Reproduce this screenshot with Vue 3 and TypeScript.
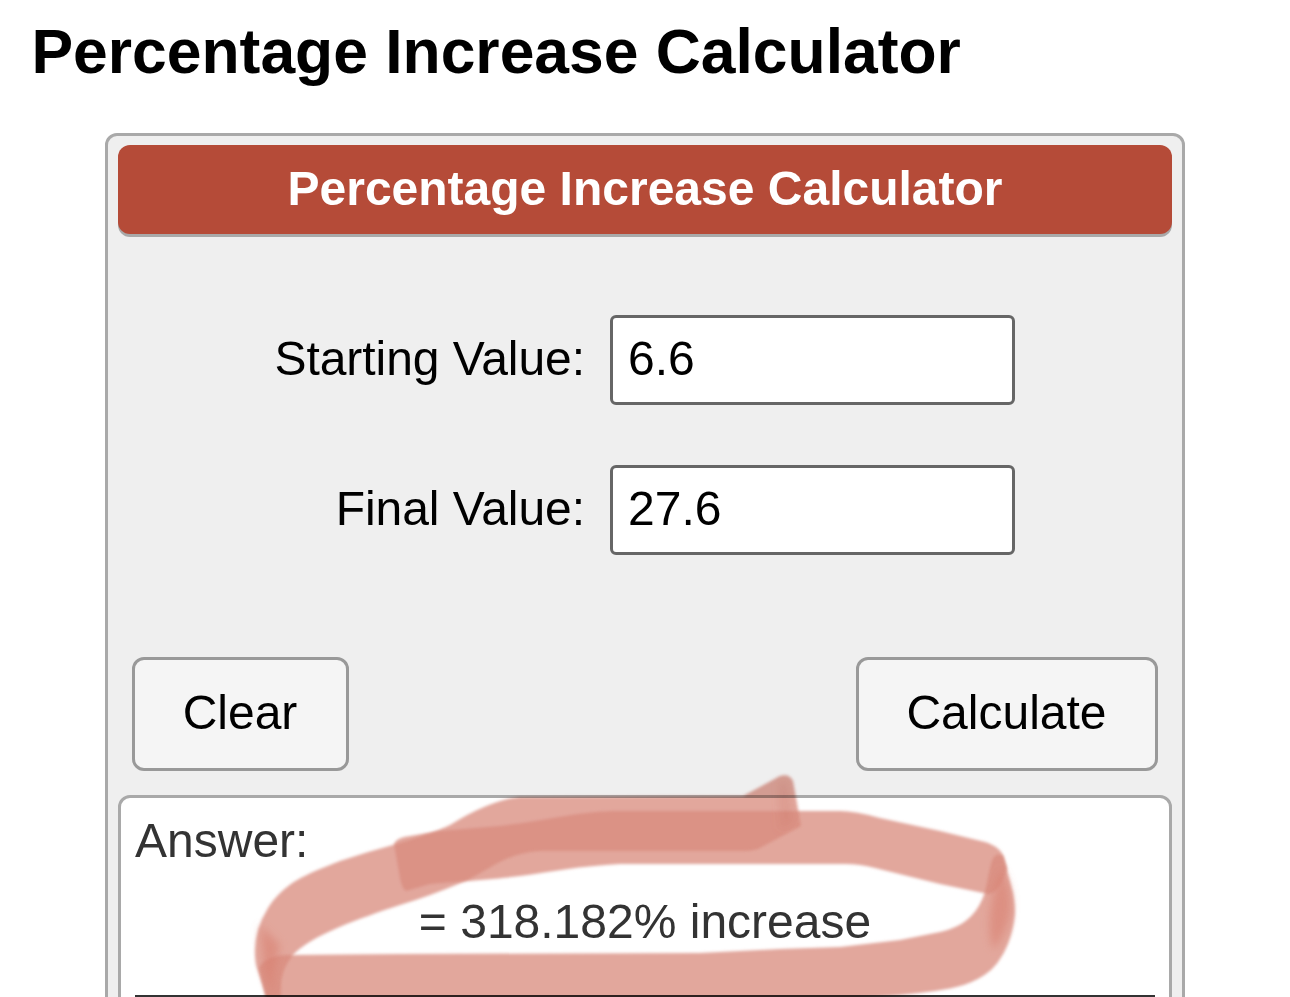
<script setup lang="ts">
import { ref } from 'vue';

const startingValue = ref('6.6');
const finalValue = ref('27.6');
const answer = ref('');

const calculate = () => {
  const start = parseFloat(startingValue.value);
  const end = parseFloat(finalValue.value);
  if (!start || isNaN(end)) {
    answer.value = '';
    return;
  }
  const change = ((end - start) / Math.abs(start)) * 100;
  const direction = change < 0 ? 'decrease' : 'increase';
  answer.value = `= ${Math.abs(change).toFixed(3)}% ${direction}`;
};

const clear = () => {
  startingValue.value = '';
  finalValue.value = '';
  answer.value = '';
};

calculate();
</script>

<template>
  <div class="page">
    <h1 class="page-title">Percentage Increase Calculator</h1>

    <form class="calculator" @submit.prevent="calculate">
      <h2 class="calculator-title">Percentage Increase Calculator</h2>

      <div class="fields">
        <label class="field">
          <span class="field-label">Starting Value:</span>
          <input v-model="startingValue" class="field-input" type="text" />
        </label>
        <label class="field">
          <span class="field-label">Final Value:</span>
          <input v-model="finalValue" class="field-input" type="text" />
        </label>
      </div>

      <div class="actions">
        <button class="button clear" type="button" @click="clear">Clear</button>
        <button class="button calculate" type="submit">Calculate</button>
      </div>

      <div class="answer">
        <div class="answer-label">Answer:</div>
        <div class="answer-result">{{ answer }}</div>
        <hr class="divider" />
      </div>
    </form>

    <!-- highlighter loop around the result -->
    <svg class="marker" viewBox="0 0 1290 997" width="1290" height="997" aria-hidden="true">
      <defs>
        <filter id="soft" x="-5%" y="-10%" width="110%" height="120%">
          <feGaussianBlur stdDeviation="1.7" />
        </filter>
        <filter id="softer" x="-80%" y="-40%" width="260%" height="180%">
          <feGaussianBlur stdDeviation="4" />
        </filter>
      </defs>
      <path class="stroke" filter="url(#soft)" d="M394 844 Q396 839 404 837 L440 831 L500 826 C550 820 580 811 620 811 L840 811 Q855 811 880 818 L940 831 L985 842 Q1001 847 1004 858 L1007 868 Q1000 893 988 894 L940 884 L875 868 Q860 864 845 864 L620 864 C580 866 550 872 520 876 S450 882 430 884 L406 891 Q401 888 399 872 Z" />
      <path class="stroke" filter="url(#soft)" d="M990 868 Q993 850 1003 856 L1011 885 Q1015 898 1015 912 C1014 935 1004 958 991 970 C975 984 955 988 935 991 Q900 996 860 998 L850 1005 L268 1005 L259 968 Q266 955 290 955 L400 954 L700 953 L780 949 L840 947 L900 940 L940 932 C968 926 979 910 985 892 Z" />
      <path class="stroke" filter="url(#soft)" d="M268 1005 L264 990 L256 965 Q251 935 268 908 C285 882 305 875 340 861 Q370 851 400 843 C425 835 435 832 450 825 Q490 800 520 797 L743 796 L780 776 Q789 773 793 781 L801 826 L758 849 Q752 851 745 851 L540 851 C505 853 490 870 463 882 Q430 896 400 905 C360 918 310 936 293 955 Q281 970 281 985 L281 1005 Z" />
      <path class="shade" filter="url(#softer)" d="M1001 868 Q1011 885 1011 905 T994 950 Q985 930 994 890 Z" />
      <path class="shade" filter="url(#softer)" d="M260 925 L280 945 L274 970 L272 995 L264 970 Z" />
      <path class="tip" filter="url(#softer)" d="M778 782 L787 780 L794 822 L780 830 Z" />
    </svg>
  </div>
</template>

<style>
body {
  margin: 0;
  background: #fff;
}
</style>

<style scoped>
.page {
  position: relative;
  display: flex;
  flex-direction: column;
  width: 1290px;
  height: 997px;
  overflow: hidden;
  background: #fff;
  color: #000;
  font-family: "Liberation Sans", Arial, Helvetica, sans-serif;
  font-size: 48px;
}

.page-title {
  margin: 0 0 30px 31.5px;
  font-size: 62.4px;
  font-weight: bold;
  line-height: 103px;
  white-space: nowrap;
}

.calculator {
  box-sizing: border-box;
  flex: none;
  width: 1080px;
  height: 1100px;
  margin-left: 105px;
  padding: 9px 10px;
  border: 3px solid #a9a9a9;
  border-radius: 12px;
  background: #efefef;
}

.calculator-title {
  height: 87px;
  margin: 0;
  padding-bottom: 2px;
  border-radius: 12px;
  background: #b54b38;
  box-shadow: 0 3px 0 #a9a9a9;
  color: #fff;
  font-size: 48px;
  font-weight: bold;
  line-height: 87px;
  text-align: center;
}

.fields {
  display: flex;
  flex-direction: column;
  gap: 60px;
  margin-top: 81px;
}

.field {
  display: flex;
  align-items: center;
  gap: 25px;
}

.field-label {
  width: 467px;
  padding-bottom: 3px;
  letter-spacing: -0.05px;
  text-align: right;
  white-space: nowrap;
}

.field-input {
  box-sizing: border-box;
  width: 405px;
  height: 90px;
  padding: 0 15px 3px;
  border: 3px solid #666;
  border-radius: 6px;
  outline: none;
  background: #fff;
  color: #000;
  font: inherit;
}

.actions {
  display: flex;
  justify-content: space-between;
  margin: 102px 14px 24px;
}

.button {
  box-sizing: border-box;
  height: 114px;
  padding: 0 1px 4px 0;
  border: 3px solid #999;
  border-radius: 12px;
  background: #f5f5f5;
  color: #000;
  font: inherit;
  cursor: pointer;
}

.clear {
  width: 217px;
}

.calculate {
  width: 302px;
}

.answer {
  height: 300px;
  padding: 15px 14px 0;
  border: 3px solid #a9a9a9;
  border-radius: 12px;
  background: #fff;
  color: #333;
  line-height: 56px;
}

.answer-result {
  height: 56px;
  margin-top: 25px;
  text-align: center;
}

.divider {
  height: 3px;
  margin: 45px 0 0;
  border: 0;
  background: #333;
}

.marker {
  position: absolute;
  top: 0;
  left: 0;
  mix-blend-mode: multiply;
  pointer-events: none;
}

.stroke {
  fill: #d98b7d;
  fill-opacity: 0.76;
}

.shade {
  fill: #d88070;
  fill-opacity: 0.6;
}

.tip {
  fill: #c8705f;
  fill-opacity: 0.2;
}
</style>
